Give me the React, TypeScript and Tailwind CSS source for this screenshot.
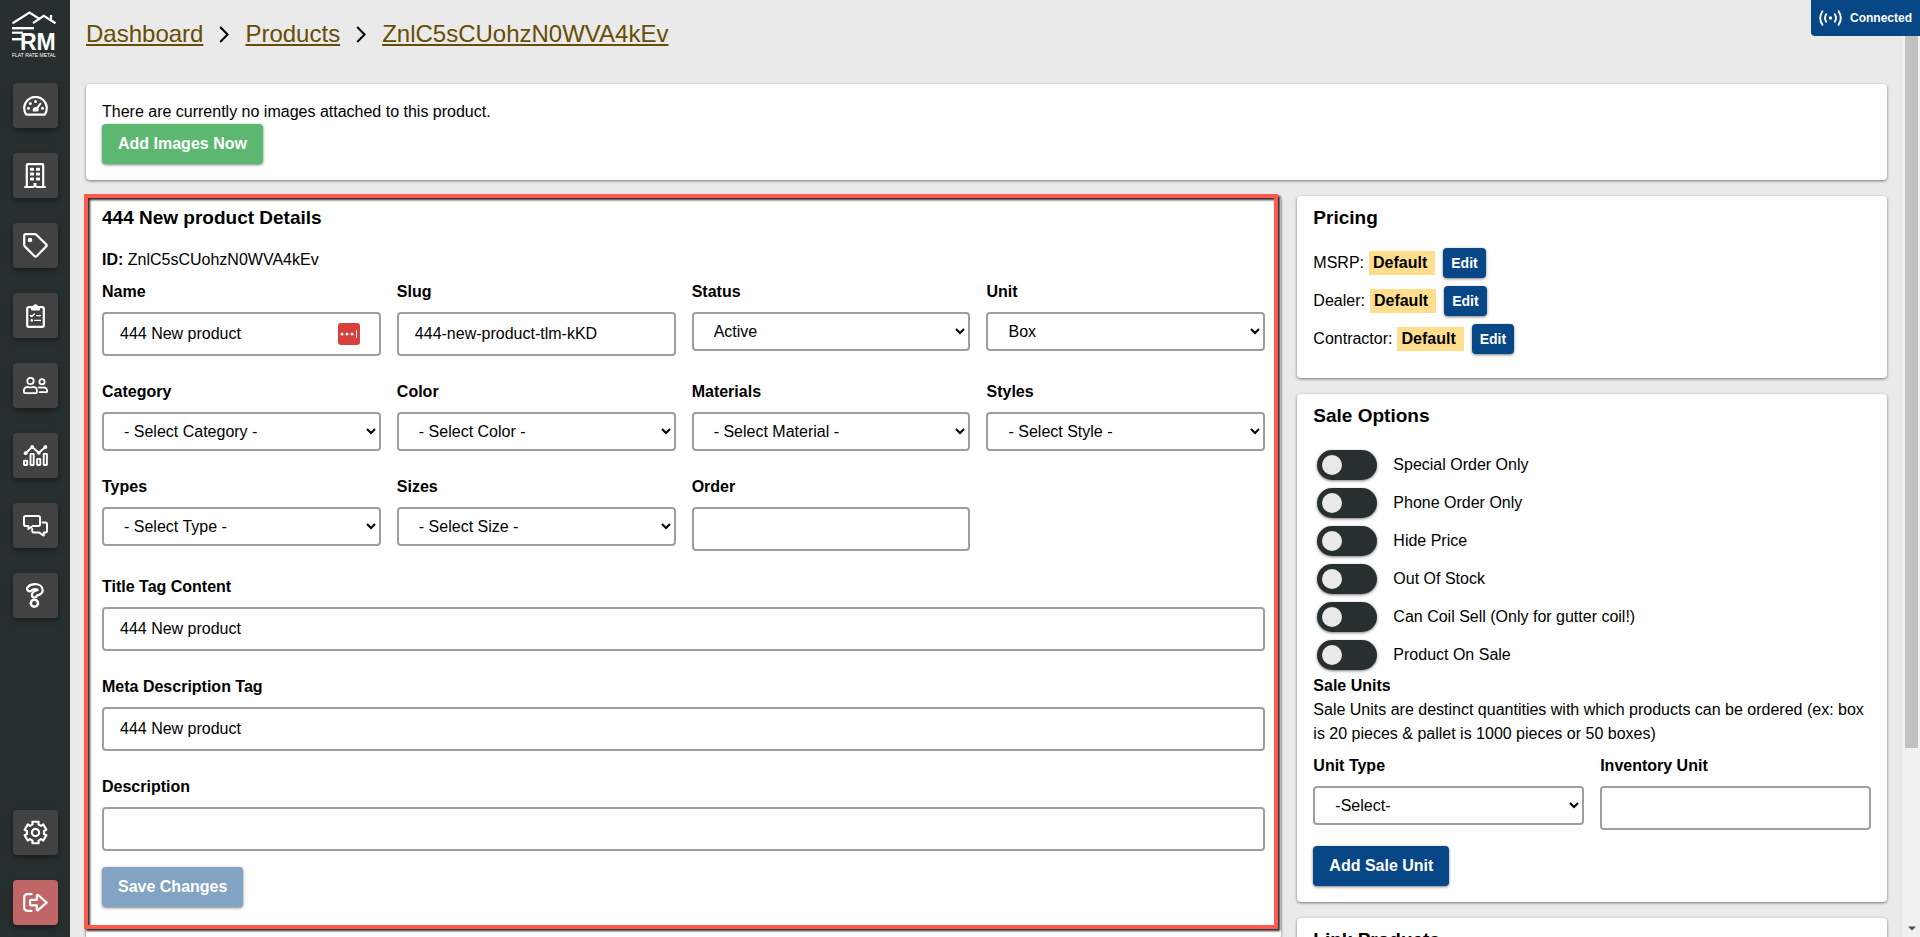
import React, { useId, useState } from "react";

/* ---------- Icons ---------- */

type IconProps = { w: number; h: number; children: React.ReactNode };

function Glyph({ w, h, children }: IconProps) {
  return (
    <svg
      width={w}
      height={h}
      viewBox={`0 0 ${w} ${h}`}
      fill="none"
      stroke="currentColor"
      strokeWidth="2"
      strokeLinecap="round"
      strokeLinejoin="round"
      aria-hidden="true"
    >
      {children}
    </svg>
  );
}

const GaugeIcon = () => (
  <Glyph w={25} h={20}>
    <path d="M3.2 18.6A11.3 11.3 0 1 1 21.8 18.6Z" strokeWidth="2.2" />
    <g fill="currentColor" stroke="none">
      <circle cx="5.5" cy="12.3" r="1.5" />
      <circle cx="7.4" cy="7.4" r="1.5" />
      <circle cx="12.5" cy="5.4" r="1.5" />
      <circle cx="19.5" cy="12.3" r="1.5" />
      <path d="M17.2 6.4 18.6 7.4 15.4 12.2A3 3 0 0 1 15 15.6H10A3 3 0 0 1 13.4 11.2Z" />
    </g>
  </Glyph>
);

const BuildingIcon = () => (
  <Glyph w={22} h={25}>
    <path d="M2.8 24V2.2Q2.8 1.2 3.8 1.2H18.2Q19.2 1.2 19.2 2.2V24" strokeWidth="2.2" />
    <path d="M1 24H9.5M12.5 24H21" />
    <path d="M11 24V20" strokeWidth="3" strokeLinecap="butt" />
    <g fill="currentColor" stroke="none">
      <rect x="6" y="4.8" width="4" height="3" rx="0.6" />
      <rect x="12" y="4.8" width="4" height="3" rx="0.6" />
      <rect x="6" y="9.6" width="4" height="3" rx="0.6" />
      <rect x="12" y="9.6" width="4" height="3" rx="0.6" />
      <rect x="6" y="14.4" width="4" height="3" rx="0.6" />
      <rect x="12" y="14.4" width="4" height="3" rx="0.6" />
    </g>
  </Glyph>
);

const TagIcon = () => (
  <Glyph w={25} h={25}>
    <path
      d="M1.2 2.8Q1.2 1.2 2.8 1.2H11.8Q12.8 1.2 13.6 2L23.2 11.4Q24.2 12.4 23.2 13.4L13.6 23.2Q12.6 24.2 11.6 23.2L2 13.6Q1.2 12.8 1.2 11.8Z"
      strokeWidth="2.2"
    />
    <circle cx="7" cy="7" r="2.3" fill="currentColor" stroke="none" />
  </Glyph>
);

const ClipboardIcon = () => (
  <Glyph w={19} h={25}>
    <rect x="1.2" y="4.2" width="16.6" height="19.6" rx="1.6" strokeWidth="2.2" />
    <path
      d="M5 4H6.6A3 3 0 0 1 12.4 4H14V6.6Q14 7.6 13 7.6H6Q5 7.6 5 6.6Z"
      fill="currentColor"
      stroke="none"
    />
    <circle cx="9.5" cy="3.4" r="1.2" fill="currentColor" />
    <path d="M4.4 12.4 5.8 13.6 8.4 11" strokeWidth="1.4" />
    <path d="M10.6 12.6H14.4M8.8 17.4H14.4" strokeWidth="1.4" />
    <circle cx="5.8" cy="17.4" r="1.3" fill="currentColor" stroke="none" />
  </Glyph>
);

const UsersIcon = () => (
  <Glyph w={25} h={17}>
    <circle cx="7.5" cy="4" r="3.2" strokeWidth="1.8" />
    <path
      d="M4.6 9.8Q7.5 11 10.4 9.8Q13.6 10 13.9 13.2V15Q13.9 16.1 12.8 16.1H2Q0.9 16.1 0.9 15V13.2Q1.2 10 4.6 9.8Z"
      strokeWidth="1.8"
    />
    <circle cx="19" cy="4.8" r="2.6" strokeWidth="1.8" />
    <path
      d="M15.6 10.5Q16.4 10.2 17 10.3Q19 11.1 21 10.3Q23.6 10.6 24.1 13.2V14.4Q24.1 15.2 23.2 15.2H16.6"
      strokeWidth="1.8"
    />
  </Glyph>
);

const AnalyticsIcon = () => (
  <Glyph w={25} h={21}>
    <g strokeWidth="1.9">
      <rect x="1" y="15.6" width="3.2" height="4.4" rx="0.4" />
      <rect x="7.5" y="8.9" width="3.2" height="11.1" rx="0.4" />
      <rect x="14.1" y="13.9" width="3.2" height="6.1" rx="0.4" />
      <rect x="20.7" y="8.9" width="3.2" height="11.1" rx="0.4" />
      <path d="M2.6 8.2 9.2 2 15.8 7.8 22.4 2" />
    </g>
    <g fill="currentColor" stroke="none">
      <circle cx="2.6" cy="8.2" r="1.9" />
      <circle cx="9.2" cy="2" r="1.9" />
      <circle cx="15.8" cy="7.8" r="1.9" />
      <circle cx="22.4" cy="2" r="1.9" />
    </g>
  </Glyph>
);

const ChatIcon = () => (
  <Glyph w={25} h={22}>
    <path
      d="M2.8 1H15.2Q17 1 17 2.8V9.2Q17 11 15.2 11H9.8L5.4 14V11H2.8Q1 11 1 9.2V2.8Q1 1 2.8 1Z"
      strokeWidth="2"
    />
    <path
      d="M19.6 7.6H22.2Q24 7.6 24 9.4V15.8Q24 17.6 22.2 17.6H20.8V20.6L16.2 17.6H11Q9.2 17.6 9.2 15.8V14"
      strokeWidth="2"
    />
  </Glyph>
);

const QuestionIcon = () => (
  <Glyph w={18} h={25}>
    <path d="M3.6 5.8C5 4.2 6.8 3.7 9 3.7C12.2 3.7 14.2 5.2 14.2 7.4C14.2 10 8.4 9.6 8.4 12" strokeWidth="7.2" />
    <path
      d="M3.6 5.8C5 4.2 6.8 3.7 9 3.7C12.2 3.7 14.2 5.2 14.2 7.4C14.2 10 8.4 9.6 8.4 12"
      stroke="#424242"
      strokeWidth="2.8"
    />
    <circle cx="8.4" cy="20.2" r="4.8" fill="currentColor" stroke="none" />
    <circle cx="8.4" cy="20.2" r="2.3" fill="#424242" stroke="none" />
  </Glyph>
);

const gearPath = (() => {
  const pts: string[] = [];
  const at = (deg: number, r: number) => {
    const a = (deg * Math.PI) / 180;
    pts.push(`${(12.5 + r * Math.cos(a)).toFixed(2)} ${(12.5 + r * Math.sin(a)).toFixed(2)}`);
  };
  for (let k = 0; k < 6; k++) {
    const c = k * 60 - 90;
    at(c - 20, 8.6);
    at(c - 16, 11.2);
    at(c + 16, 11.2);
    at(c + 20, 8.6);
  }
  return `M${pts.join("L")}Z`;
})();

const GearIcon = () => (
  <Glyph w={25} h={25}>
    <path d={gearPath} strokeWidth="2.2" />
    <circle cx="12.5" cy="12.5" r="3.6" strokeWidth="2.2" />
  </Glyph>
);

const SignOutIcon = () => (
  <Glyph w={25} h={19}>
    <path d="M8.6 1.2H4.4Q1.2 1.2 1.2 4.4V14.6Q1.2 17.8 4.4 17.8H8.6" strokeWidth="2.2" />
    <path
      d="M8 6.8Q7 6.8 7 7.8V11.4Q7 12.4 8 12.4H13.8V17L14.8 17.4L23.6 9.6L14.8 1.8L13.8 2.2V6.8Z"
      strokeWidth="2.2"
    />
  </Glyph>
);

const Chevron = () => (
  <svg width="10" height="17" viewBox="0 0 10 17" fill="none" stroke="#000" strokeWidth="2" aria-hidden="true">
    <path d="M1.2 1 8.6 8.5 1.2 16" />
  </svg>
);

const StreamIcon = () => (
  <svg
    width="23"
    height="16"
    viewBox="0 0 23 16"
    fill="none"
    stroke="currentColor"
    strokeWidth="1.9"
    strokeLinecap="round"
    aria-hidden="true"
  >
    <circle cx="11.5" cy="8" r="1.7" fill="currentColor" stroke="none" />
    <path d="M7.2 4.2Q4.8 8 7.2 11.8M15.8 4.2Q18.2 8 15.8 11.8" />
    <path d="M3.4 1.2Q-1 8 3.4 14.8M19.6 1.2Q24 8 19.6 14.8" />
  </svg>
);

const Logo = () => (
  <svg width="46" height="48" viewBox="0 0 46 48" role="img" aria-label="Flat Rate Metal">
    <g fill="none" stroke="#fff" strokeWidth="2.2">
      <path d="M0.5 12.2 17.5 1.6 28 8.2" />
      <path d="M21 12.2 31.8 4.8 43.5 12.2" />
      <path d="M39 8.4V4" />
    </g>
    <g fill="#fff" fontFamily="'Liberation Sans', Arial, sans-serif">
      <rect x="0" y="16" width="22" height="2.4" />
      <rect x="0" y="20.6" width="11" height="2.2" />
      <rect x="0" y="27" width="11" height="2.4" />
      <text x="8" y="39" fontSize="23" fontWeight="700">
        RM
      </text>
      <text x="0" y="46" fontSize="5">
        FLAT RATE METAL
      </text>
    </g>
  </svg>
);

/* ---------- Shared pieces ---------- */

function NavButton({ label, danger, children }: { label: string; danger?: boolean; children: React.ReactNode }) {
  return (
    <button
      type="button"
      aria-label={label}
      className={`flex size-[45px] items-center justify-center rounded text-white shadow-[0_3px_6px_rgba(0,0,0,0.4)] ${
        danger ? "bg-[#c06666]" : "bg-[#424242]"
      }`}
    >
      {children}
    </button>
  );
}

function Card({ children }: { children: React.ReactNode }) {
  return (
    <section className="rounded bg-white px-4 pt-2 pb-4 shadow-[0_1px_3px_rgba(0,0,0,0.5)]">{children}</section>
  );
}

function Title({ children }: { children: React.ReactNode }) {
  return <h3 className="text-[19px] leading-7 font-bold">{children}</h3>;
}

function TextField({ label, value = "", badge }: { label: string; value?: string; badge?: boolean }) {
  const id = useId();
  return (
    <div className="min-w-0">
      <label htmlFor={id} className="mb-2 block font-bold">
        {label}
      </label>
      <div className="relative">
        <input
          id={id}
          type="text"
          defaultValue={value}
          className="block h-11 w-full rounded border-2 border-[#9e9e9e] bg-white px-4"
        />
        {badge && (
          <svg
            width="22"
            height="22"
            viewBox="0 0 22 22"
            className="absolute top-[11px] right-[21px]"
            fill="#fff"
            aria-hidden="true"
          >
            <rect width="22" height="22" rx="3" fill="#d93f3b" />
            <circle cx="4" cy="11" r="1.5" />
            <circle cx="9" cy="11" r="1.5" />
            <circle cx="14" cy="11" r="1.5" />
            <rect x="18" y="7" width="1" height="8" />
          </svg>
        )}
      </div>
    </div>
  );
}

function SelectField({ label, value }: { label: string; value: string }) {
  const id = useId();
  return (
    <div className="min-w-0">
      <label htmlFor={id} className="mb-2 block font-bold">
        {label}
      </label>
      <select id={id} className="block h-[39px] w-full rounded border-2 border-[#9e9e9e] bg-white px-4">
        <option>{value}</option>
      </select>
    </div>
  );
}

const buttonBase = "h-10 rounded px-4 font-bold text-white shadow-[0_1px_3px_rgba(0,0,0,0.5)]";

function PriceRow({ label }: { label: string }) {
  return (
    <div className="my-2 flex h-[30px] items-center">
      <span>{label}:</span>
      <strong className="ml-[5px] bg-[#ffdf8e] pr-2 pl-1">Default</strong>
      <button
        type="button"
        aria-label={`Edit ${label} price`}
        className="ml-2 h-[30px] rounded bg-[#074786] px-2 text-sm font-bold text-white shadow-[0_1px_3px_rgba(0,0,0,0.5)]"
      >
        Edit
      </button>
    </div>
  );
}

function Toggle({ label }: { label: string }) {
  const [on, setOn] = useState(false);
  return (
    <label className="my-1 flex h-[30px] items-center gap-4">
      <input type="checkbox" className="peer sr-only" checked={on} onChange={(e) => setOn(e.target.checked)} />
      <span
        className={`ml-1 flex h-[30px] w-[60px] items-center rounded-full bg-[#28302f] px-[5px] shadow-[0_1px_3px_rgba(0,0,0,0.5)] ${
          on ? "justify-end" : "justify-start"
        }`}
      >
        <span className="size-5 rounded-full bg-[#eaeaea]" />
      </span>
      <span>{label}</span>
    </label>
  );
}

const toggles = [
  "Special Order Only",
  "Phone Order Only",
  "Hide Price",
  "Out Of Stock",
  "Can Coil Sell (Only for gutter coil!)",
  "Product On Sale",
];

/* ---------- Page ---------- */

export default function App() {
  return (
    <div className="relative flex h-screen overflow-hidden bg-[#eaeaea] font-['Liberation_Sans',Arial,sans-serif] text-base leading-6 text-black">
      <nav aria-label="Main" className="flex w-[70px] shrink-0 flex-col items-center bg-[#28302f] pt-[11px] pb-3">
        <a href="#home" className="mb-6 block">
          <Logo />
        </a>
        <div className="flex flex-col gap-[25px]">
          <NavButton label="Dashboard"><GaugeIcon /></NavButton>
          <NavButton label="Companies"><BuildingIcon /></NavButton>
          <NavButton label="Products"><TagIcon /></NavButton>
          <NavButton label="Orders"><ClipboardIcon /></NavButton>
          <NavButton label="Users"><UsersIcon /></NavButton>
          <NavButton label="Analytics"><AnalyticsIcon /></NavButton>
          <NavButton label="Messages"><ChatIcon /></NavButton>
          <NavButton label="Help"><QuestionIcon /></NavButton>
        </div>
        <div className="mt-auto flex flex-col gap-[25px]">
          <NavButton label="Settings"><GearIcon /></NavButton>
          <NavButton label="Sign out" danger><SignOutIcon /></NavButton>
        </div>
      </nav>

      <main className="min-w-0 flex-1 overflow-hidden px-4">
        <nav aria-label="Breadcrumb" className="flex h-[84px] items-start gap-4 pt-4 text-2xl leading-9 text-[#664e03]">
          <a href="#dashboard" className="underline">Dashboard</a>
          <span className="flex h-9 items-center"><Chevron /></span>
          <a href="#products" className="underline">Products</a>
          <span className="flex h-9 items-center"><Chevron /></span>
          <a href="#product" className="underline">ZnlC5sCUohzN0WVA4kEv</a>
        </nav>

        <Card>
          <p className="pt-2">There are currently no images attached to this product.</p>
          <button type="button" className={`${buttonBase} bg-[#5cb870]`}>
            Add Images Now
          </button>
        </Card>

        <div className="mt-4 grid grid-cols-3 items-start gap-4">
          <div className="relative col-span-2">
            <section className="rounded bg-white px-4 pt-2 pb-8 shadow-[0_1px_3px_rgba(0,0,0,0.5)]">
              <Title>444 New product Details</Title>
              <p className="mt-4 mb-2">
                <strong>ID:</strong> ZnlC5sCUohzN0WVA4kEv
              </p>
              <form className="flex flex-col gap-6" onSubmit={(e) => e.preventDefault()}>
                <div className="grid grid-cols-4 gap-4">
                  <TextField label="Name" value="444 New product" badge />
                  <TextField label="Slug" value="444-new-product-tlm-kKD" />
                  <SelectField label="Status" value="Active" />
                  <SelectField label="Unit" value="Box" />
                </div>
                <div className="grid grid-cols-4 gap-4">
                  <SelectField label="Category" value="- Select Category -" />
                  <SelectField label="Color" value="- Select Color -" />
                  <SelectField label="Materials" value="- Select Material -" />
                  <SelectField label="Styles" value="- Select Style -" />
                </div>
                <div className="grid grid-cols-4 gap-4">
                  <SelectField label="Types" value="- Select Type -" />
                  <SelectField label="Sizes" value="- Select Size -" />
                  <TextField label="Order" />
                </div>
                <TextField label="Title Tag Content" value="444 New product" />
                <TextField label="Meta Description Tag" value="444 New product" />
                <div>
                  <TextField label="Description" />
                  <button type="submit" className={`${buttonBase} mt-4 bg-[#83a3c3]`}>
                    Save Changes
                  </button>
                </div>
              </form>
            </section>
            <div className="pointer-events-none absolute -top-0.5 right-[3px] bottom-2.5 -left-0.5 border-4 border-[#ff5a4d] drop-shadow-[2px_2px_1px_rgba(0,0,0,0.85)]" />
          </div>

          <div className="flex flex-col gap-4">
            <Card>
              <Title>Pricing</Title>
              <div className="mt-4 mb-2">
                <PriceRow label="MSRP" />
                <PriceRow label="Dealer" />
                <PriceRow label="Contractor" />
              </div>
            </Card>

            <Card>
              <Title>Sale Options</Title>
              <div className="mt-4 flex flex-col">
                {toggles.map((t) => (
                  <Toggle key={t} label={t} />
                ))}
              </div>
              <h4 className="font-bold">Sale Units</h4>
              <p>
                Sale Units are destinct quantities with which products can be ordered (ex: box is 20 pieces &amp; pallet
                is 1000 pieces or 50 boxes)
              </p>
              <div className="mt-2 grid grid-cols-2 gap-4">
                <SelectField label="Unit Type" value="-Select-" />
                <TextField label="Inventory Unit" />
              </div>
              <button type="button" className={`${buttonBase} mt-4 bg-[#074786]`}>
                Add Sale Unit
              </button>
            </Card>

            <Card>
              <Title>Link Products</Title>
            </Card>
          </div>
        </div>
      </main>

      <div className="flex w-[17px] shrink-0 flex-col items-center justify-between bg-[#f1f1f1] pt-4 pb-1.5" aria-hidden="true">
        <div className="h-4/5 w-[13px] bg-[#c1c1c1]" />
        <svg width="8" height="5" viewBox="0 0 8 5">
          <path d="M0 0.5H8L4 4.5Z" fill="#505050" />
        </svg>
      </div>

      <div className="absolute top-0 right-0 flex h-9 items-center gap-2 rounded-bl bg-[#074786] px-2 text-xs font-bold text-white">
        <StreamIcon />
        <span>Connected</span>
      </div>
    </div>
  );
}
